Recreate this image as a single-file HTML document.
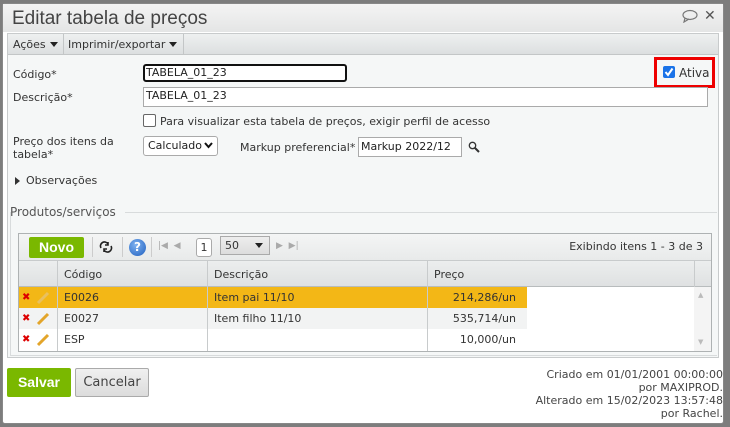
<!DOCTYPE html>
<html><head><meta charset="utf-8"><style>
*{box-sizing:border-box;margin:0;padding:0}
body{width:730px;height:427px;overflow:hidden;background:#7d7d7d;font-family:"DejaVu Sans","Liberation Sans",sans-serif;font-size:11px;color:#333;position:relative}
.a{position:absolute}
.dlg{left:2px;top:3px;width:722px;height:421px;background:#fff;border:1px solid #888;border-radius:3px}
.title{left:3px;top:4px;width:720px;height:28px;background:linear-gradient(#f4f4f4,#e4e5e5);color:#444;padding:4px 9px;font-family:"Liberation Sans","DejaVu Sans",sans-serif;font-size:19px}
.panel{left:7px;top:33px;width:712px;height:325px;background:#f5f7f7;border:1px solid #c8cbcc}
.tb{left:8px;top:34px;width:710px;height:21px;background:linear-gradient(#eef0f0,#dcdfe0);border-bottom:1px solid #c3c6c7}
.inp{background:#fff;border:1px solid #aaa;padding:1px 2px;font-size:11px;color:#222;white-space:nowrap}
.tri{display:inline-block;border-left:4px solid transparent;border-right:4px solid transparent;border-top:5px solid #222;margin-left:4px;vertical-align:1px}
.grid{left:18px;top:233px;width:694px;height:119px;border:1px solid #aeb2b3;background:#fff;overflow:hidden}
.row{position:absolute;left:0;height:21px;line-height:21px;font-size:11px;color:#333}
.btn{border-radius:2px;font-weight:bold;color:#fff;background:#7ab800;font-family:"Liberation Sans",sans-serif}
</style></head><body>
<div class="a dlg"></div>
<div class="a title">Editar tabela de preços</div>
<svg class="a" style="left:681px;top:9px" width="18" height="14"><ellipse cx="9" cy="6" rx="7" ry="4.5" fill="none" stroke="#777" stroke-width="1.2"/><path d="M4 9 L3 13 L8 10" fill="none" stroke="#777" stroke-width="1.2"/></svg>
<div class="a" style="left:704px;top:8px;font-size:14px;font-weight:bold;color:#555">✕</div>
<div class="a panel"></div>
<div class="a tb"></div>
<div class="a" style="left:13px;top:38px">Ações<span class="tri"></span></div>
<div class="a" style="left:63px;top:34px;width:1px;height:21px;background:#c3c6c7"></div>
<div class="a" style="left:68px;top:38px">Imprimir/exportar<span class="tri"></span></div>
<div class="a" style="left:183px;top:34px;width:1px;height:21px;background:#c3c6c7"></div>

<div class="a" style="left:13px;top:68px">Código*</div>
<div class="a inp" style="left:143px;top:64px;width:204px;height:18px;border:2px solid #111;border-radius:3px;padding:0 1px">TABELA_01_23</div>
<div class="a" style="left:654px;top:57px;width:61px;height:31px;border:3px solid #e00"></div>
<div class="a" style="left:663px;top:66px;width:12px;height:12px;background:#1a73e8;border-radius:2px"></div>
<svg class="a" style="left:663px;top:66px" width="12" height="12"><path d="M2.5 6 L5 9 L9.5 2.5" fill="none" stroke="#fff" stroke-width="2"/></svg>
<div class="a" style="left:679px;top:66px;font-size:12px">Ativa</div>
<div class="a" style="left:13px;top:91px">Descrição*</div>
<div class="a inp" style="left:143px;top:87px;width:565px;height:20px">TABELA_01_23</div>
<div class="a" style="left:143px;top:114px;width:13px;height:13px;border:1px solid #666;border-radius:2px;background:#fff"></div>
<div class="a" style="left:160px;top:115px">Para visualizar esta tabela de preços, exigir perfil de acesso</div>
<div class="a" style="left:13px;top:135px;line-height:13px">Preço dos itens da<br>tabela*</div>
<div class="a inp" style="left:143px;top:136px;width:75px;height:20px;border-radius:3px;padding:2px 4px">Calculado</div>
<svg class="a" style="left:204px;top:142px" width="9" height="7"><path d="M1 1 L4.5 5 L8 1" fill="none" stroke="#111" stroke-width="2"/></svg>
<div class="a" style="left:240px;top:141px">Markup preferencial*</div>
<div class="a inp" style="left:358px;top:137px;width:104px;height:20px;padding:2px 2px">Markup 2022/12</div>
<svg class="a" style="left:468px;top:141px" width="12" height="12"><circle cx="4.5" cy="4.5" r="3.2" fill="none" stroke="#333" stroke-width="1.3"/><path d="M7 7 L11 11" stroke="#333" stroke-width="2"/></svg>
<div class="a" style="left:15px;top:177px;border-top:4px solid transparent;border-bottom:4px solid transparent;border-left:5px solid #333"></div>
<div class="a" style="left:26px;top:174px">Observações</div>
<div class="a" style="left:10px;top:205px;font-size:12px;color:#555">Produtos/serviços</div>
<div class="a" style="left:125px;top:212px;width:592px;height:1px;background:#d8dbdc"></div>
<div class="a" style="left:10px;top:212px;width:1px;height:143px;background:#d8dbdc"></div>
<div class="a" style="left:10px;top:355px;width:707px;height:1px;background:#d8dbdc"></div>

<div class="a grid">
 <div class="row" style="top:0;width:692px;height:27px;background:linear-gradient(#f4f5f5,#e8eaea);border-bottom:1px solid #c8cbcc"></div>
 <div class="a btn" style="left:10px;top:3px;width:55px;height:21px;font-size:14px;text-align:center;line-height:21px">Novo</div>
 <div class="a" style="left:73px;top:3px;width:1px;height:20px;background:#ccc"></div>
 <svg class="a" style="left:80px;top:7px" width="14" height="12"><path d="M2 7 A4 4 0 0 1 9 3 M9 1 L9 4 L6 4 M12 5 A4 4 0 0 1 5 9 M5 11 L5 8 L8 8" fill="none" stroke="#222" stroke-width="1.6"/></svg>
 <div class="a" style="left:103px;top:3px;width:1px;height:20px;background:#ccc"></div>
 <div class="a" style="left:110px;top:5px;width:17px;height:17px;border-radius:50%;background:radial-gradient(circle at 40% 35%,#7fb2f0,#1f5fbf);color:#fff;font-weight:bold;font-size:12px;text-align:center;line-height:17px">?</div>
 <div class="a" style="left:132px;top:3px;width:1px;height:20px;background:#ccc"></div>
 <div class="a" style="left:139px;top:7px;color:#aaa;font-size:9px">|◀ &nbsp;◀</div>
 <div class="a" style="left:177px;top:4px;width:16px;height:19px;border:1px solid #aaa;border-radius:3px;background:#fff;text-align:center;line-height:17px">1</div>
 <div class="a" style="left:201px;top:2px;width:50px;height:19px;border:1px solid #aaa;background:linear-gradient(#eee,#ddd);padding:2px 4px">50<span class="tri" style="margin-left:16px"></span></div>
 <div class="a" style="left:257px;top:7px;color:#aaa;font-size:9px">▶ &nbsp;▶|</div>
 <div class="a" style="right:8px;top:6px">Exibindo itens 1 - 3 de 3</div>
 <div class="row" style="top:27px;width:692px;height:26px;background:linear-gradient(#eceeee,#dfe1e2);border-bottom:1px solid #b8bcbd"></div>
 <div class="a" style="left:38px;top:27px;width:1px;height:90px;background:#c8cbcc"></div>
 <div class="a" style="left:188px;top:27px;width:1px;height:90px;background:#c8cbcc"></div>
 <div class="a" style="left:408px;top:27px;width:1px;height:90px;background:#c8cbcc"></div>
 <div class="a" style="left:675px;top:27px;width:1px;height:26px;background:#c8cbcc"></div>
 <div class="a" style="left:45px;top:34px">Código</div>
 <div class="a" style="left:195px;top:34px">Descrição</div>
 <div class="a" style="left:415px;top:34px">Preço</div>
 <div class="row" style="top:53px;width:508px;background:#f3b716"></div>
 <div class="row" style="top:74px;width:508px;background:#f2f3f3"></div>
 <div class="a" style="left:38px;top:53px;width:1px;height:64px;background:#c8cbcc"></div>
 <div class="a" style="left:188px;top:53px;width:1px;height:64px;background:#c8cbcc"></div>
 <div class="a" style="left:408px;top:53px;width:1px;height:64px;background:#c8cbcc"></div>
 <div class="row" style="top:53px;left:45px">E0026</div><div class="row" style="top:53px;left:195px">Item pai 11/10</div><div class="row" style="top:53px;left:420px;width:77px;text-align:right">214,286/un</div>
 <div class="row" style="top:74px;left:45px">E0027</div><div class="row" style="top:74px;left:195px">Item filho 11/10</div><div class="row" style="top:74px;left:420px;width:77px;text-align:right">535,714/un</div>
 <div class="row" style="top:95px;left:45px">ESP</div><div class="row" style="top:95px;left:420px;width:77px;text-align:right">10,000/un</div>
 <div class="row" style="top:53px;left:3px;color:#d00;font-size:10px;font-weight:bold">✖</div>
 <div class="row" style="top:74px;left:3px;color:#d00;font-size:10px;font-weight:bold">✖</div>
 <div class="row" style="top:95px;left:3px;color:#d00;font-size:10px;font-weight:bold">✖</div>
 <svg class="a" style="left:17px;top:57px" width="14" height="14"><path d="M2 12 L12 2" stroke="#e8c060" stroke-width="3"/></svg>
 <svg class="a" style="left:17px;top:78px" width="14" height="14"><path d="M2 12 L12 2" stroke="#e3a52a" stroke-width="3"/></svg>
 <svg class="a" style="left:17px;top:99px" width="14" height="14"><path d="M2 12 L12 2" stroke="#e3a52a" stroke-width="3"/></svg>
 <div class="a" style="left:675px;top:53px;width:17px;height:64px;background:#f4f4f4"></div>
 <div class="a" style="left:679px;top:57px;color:#bbb;font-size:7px">▲</div>
 <div class="a" style="left:679px;top:104px;color:#bbb;font-size:7px">▼</div>
</div>

<div class="a btn" style="left:7px;top:368px;width:64px;height:29px;font-size:14px;text-align:center;line-height:29px">Salvar</div>
<div class="a" style="left:75px;top:368px;width:74px;height:29px;border:1px solid #aaa;border-radius:2px;background:linear-gradient(#f0f0f0,#dcdcdc);font-size:13px;text-align:center;line-height:27px;color:#444">Cancelar</div>
<div class="a" style="right:7px;top:368px;text-align:right;line-height:13px;color:#444">Criado em 01/01/2001 00:00:00<br>por MAXIPROD.<br>Alterado em 15/02/2023 13:57:48<br>por Rachel.</div>
</body></html>
